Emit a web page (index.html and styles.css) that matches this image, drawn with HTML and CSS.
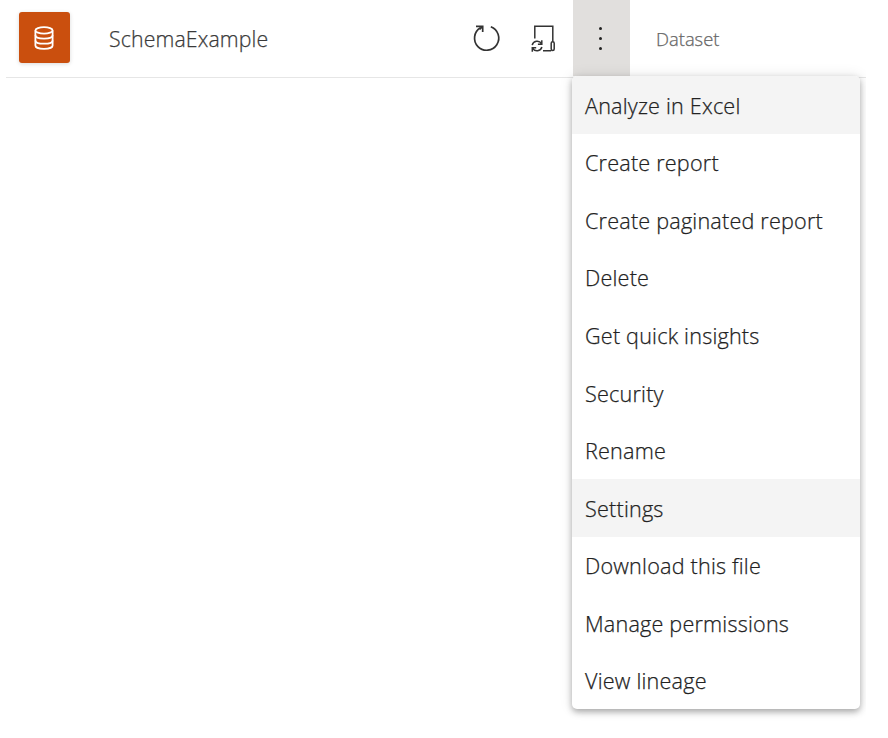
FILE: index.html
```html
<!DOCTYPE html>
<html lang="en">
<head>
<meta charset="utf-8">
<title>SchemaExample</title>
<link rel="stylesheet" href="styles.css">
</head>
<body>
<main class="list">
  <header class="row">
    <div class="tile">
      <svg width="20" height="24" viewBox="0 0 20 24" fill="none" stroke="#fff" stroke-width="1.8">
        <ellipse cx="10" cy="4.4" rx="8.6" ry="3.2"/>
        <path d="M1.4 4.4V19.4C1.4 21.4 5 22.9 10 22.9S18.6 21.4 18.6 19.4V4.4"/>
        <path d="M1.4 9.3C1.4 11.3 5 12.6 10 12.6S18.6 11.3 18.6 9.3M1.4 14.4C1.4 16.4 5 17.7 10 17.7S18.6 16.4 18.6 14.4"/>
      </svg>
    </div>
    <h1 class="name">SchemaExample</h1>
    <button class="action" aria-label="Refresh now">
      <svg width="30" height="30" viewBox="0 0 30 30" fill="none" stroke="#333" stroke-width="1.7">
        <path d="M18.8 3.8A12.1 12.1 0 1 1 8.4 4.8"/>
        <path d="M4 3.3H10.7V9M10.5 3.4L7.6 6.3"/>
      </svg>
    </button>
    <button class="action" aria-label="Schedule refresh">
      <svg width="30" height="30" viewBox="0 0 30 30" fill="none" stroke="#333" stroke-width="1.5">
        <path d="M5.8 15.6V3.3H23.8V18.5M14 27.7H22.2"/>
        <rect x="22.2" y="18.8" width="3" height="8.8" rx="1.5"/>
        <path d="M3.2 22.2C4.2 17.8 10 16.7 12.6 20.6M12.8 17.2V21.2H8.9M12.9 24C11.6 28.4 6 29 3.6 25.3M3.3 28.7V24.8H7.2"/>
      </svg>
    </button>
    <button class="action more" aria-label="More options"><i class="dot"></i><i class="dot"></i><i class="dot"></i></button>
    <span class="type">Dataset</span>
  </header>
  <ul class="menu">
    <li class="item active">Analyze in Excel</li>
    <li class="item">Create report</li>
    <li class="item">Create paginated report</li>
    <li class="item">Delete</li>
    <li class="item">Get quick insights</li>
    <li class="item">Security</li>
    <li class="item">Rename</li>
    <li class="item active">Settings</li>
    <li class="item">Download this file</li>
    <li class="item">Manage permissions</li>
    <li class="item">View lineage</li>
  </ul>
</main>
</body>
</html>
```
FILE: styles.css
```css
* { box-sizing: border-box; }

body {
  margin: 0;
  background: #fff;
  color: #222;
  font-family: "Open Sans", "Noto Sans", sans-serif;
  font-weight: 300;
  -webkit-text-stroke: .25px currentColor;
}

.list {
  position: relative;
  width: 860px;
  height: 738px;
  margin-left: 6px;
  overflow: hidden;
}

.row {
  display: flex;
  height: 78px;
  border-bottom: 1px solid #e6e6e6;
}

.tile {
  display: flex;
  align-items: center;
  justify-content: center;
  width: 51px;
  height: 51px;
  margin: 12px 0 0 13px;
  padding-right: 1px;
  border-radius: 3px;
  background: #ca4f0e;
  box-shadow: 0 1px 4px rgba(0, 0, 0, .15);
}

.name {
  width: 350px;
  margin: 0 0 0 39px;
  color: #3a3a3a;
  font-size: 21.3px;
  font-weight: 300;
  letter-spacing: .12px;
  line-height: 78px;
}

.action {
  display: flex;
  align-items: center;
  justify-content: center;
  width: 57px;
  height: 76px;
  margin: 0;
  padding: 0 1px 0 0;
  border: 0;
  background: none;
}

.more {
  flex-direction: column;
  gap: 7px;
  padding-right: 3px;
  background: #e1dfdd;
}

.dot {
  width: 3px;
  height: 3px;
  border-radius: 50%;
  background: #222;
}

.type {
  margin-left: 26px;
  color: #666;
  font-size: 18.4px;
  line-height: 77px;
}

.menu {
  position: absolute;
  top: 76px;
  left: 566px;
  width: 288px;
  margin: 0;
  padding: 0;
  border-radius: 5px;
  background: #fff;
  box-shadow: 0 3px 6px rgba(0, 0, 0, .3), 0 0 14px rgba(0, 0, 0, .1);
  list-style: none;
}

.item {
  height: 57.58px;
  padding-left: 13px;
  font-size: 21.6px;
  letter-spacing: .2px;
  line-height: 59px;
  white-space: nowrap;
}

.item:first-child {
  height: 57.2px;
  border-radius: 5px 5px 0 0;
}

.active {
  background: #f4f4f4;
  box-shadow: 0 1px 0 #f4f4f4;
}
```
